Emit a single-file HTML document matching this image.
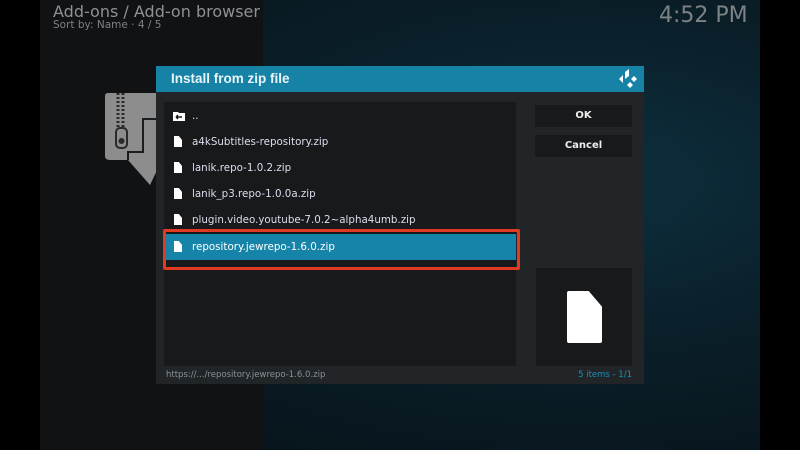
<!DOCTYPE html>
<html><head><style>
*{margin:0;padding:0;box-sizing:border-box}
body{width:800px;height:450px;overflow:hidden;background:#000;font-family:"DejaVu Sans","Liberation Sans",sans-serif;position:relative}
.bg{position:absolute;left:40px;top:0;width:720px;height:450px;background:radial-gradient(ellipse at 75% 40%,#0d3040 0%,#0a1e28 45%,#071016 100%)}
.lp{position:absolute;left:40px;top:0;width:223px;height:450px;background:#101214}
.t{position:absolute;color:#9aa0a4}
.dlg{position:absolute;left:156px;top:66px;width:488px;height:318px;background:#212528}
.hdr{position:absolute;left:0;top:0;width:488px;height:26px;background:#1683a6;color:#e8f4f8;font-family:"Liberation Sans",sans-serif;font-size:13.5px;font-weight:bold;line-height:26px;padding-left:15px}
.list{position:absolute;left:8px;top:36px;width:352px;height:264px;background:#17191b}
.row{position:absolute;left:0;width:352px;height:26px;line-height:26px;color:#dde;font-size:10.3px;padding-left:28px}
.row.sel{background:#1584a8;color:#fff}
.fi{position:absolute;left:10px;top:7px;width:8px;height:11px;background:#fff;clip-path:polygon(0 0,60% 0,100% 35%,100% 100%,0 100%)}
.btn{position:absolute;left:379px;width:97px;height:22px;background:#17191b;color:#eee;font-size:10px;font-weight:bold;text-align:center;line-height:22px}
</style></head><body>
<div class="bg"></div><div class="lp"></div>
<div class="t" style="left:53px;top:2px;font-size:16px;color:#8c9296">Add-ons / Add-on browser</div>
<div class="t" style="left:53px;top:19px;font-size:10.5px;color:#7c8286">Sort by: Name · 4 / 5</div>
<div class="t" style="left:659px;top:3px;font-size:22px;color:#7c8286">4:52 PM</div>
<svg style="position:absolute;left:104px;top:92px" width="60" height="96" viewBox="0 0 60 96">
<path d="M4 1H56V72L46 93L24 68H6Q1 68 1 64V4Q1 1 4 1Z" fill="#8d8d8d"/>
<path d="M56 27H39V60H24V68" fill="none" stroke="#1a1c1e" stroke-width="2"/>
<path d="M14 1V36M19 1V36" stroke="#2a2a2a" stroke-width="3" stroke-dasharray="2 2"/>
<rect x="12" y="36" width="11" height="20" rx="4" fill="none" stroke="#2a2a2a" stroke-width="2"/>
<circle cx="17.5" cy="49" r="3" fill="#2a2a2a"/>
</svg>
<div class="dlg">
<div class="hdr">Install from zip file</div>
<svg style="position:absolute;left:460px;top:3px" width="22" height="20" viewBox="0 0 22 20"><g fill="#fff"><path d="M3 10l4-4v8z"/><path d="M9 3l4-3 0 7-4 3z"/><path d="M15 10l3-3 3 3-3 3z"/><path d="M11 16l3-3 3 3-3 3z"/></g></svg>
<div class="list">
<div class="row" style="top:1px"><svg style="position:absolute;left:9px;top:8px" width="12" height="10"><path d="M0 1h5l1 1h6v8H0z" fill="#fff"/><path d="M3 6h6M3 6l2-2M3 6l2 2" stroke="#17191b" stroke-width="1.4"/></svg>..</div>
<div class="row" style="top:27px"><i class="fi"></i>a4kSubtitles-repository.zip</div>
<div class="row" style="top:53px"><i class="fi"></i>lanik.repo-1.0.2.zip</div>
<div class="row" style="top:79px"><i class="fi"></i>lanik_p3.repo-1.0.0a.zip</div>
<div class="row" style="top:105px"><i class="fi"></i>plugin.video.youtube-7.0.2~alpha4umb.zip</div>
<div class="row sel" style="top:132px"><i class="fi"></i>repository.jewrepo-1.6.0.zip</div>
</div>
<div style="position:absolute;left:7px;top:163px;width:357px;height:41px;border:3px solid #e03a22;border-radius:2px"></div>
<div class="btn" style="top:39px">OK</div>
<div class="btn" style="top:69px">Cancel</div>
<div style="position:absolute;left:380px;top:202px;width:96px;height:98px;background:#17191b"><div style="position:absolute;left:31px;top:23px;width:35px;height:52px;background:#fff;border-radius:2px;clip-path:polygon(0 0,62% 0,100% 30%,100% 100%,0 100%)"></div></div>
<div style="position:absolute;left:10px;top:304px;font-size:8.5px;color:#8a9094">https://.../repository.jewrepo-1.6.0.zip</div>
<div style="position:absolute;right:12px;top:304px;font-size:8.5px;color:#1d8fb5">5 items - 1/1</div>
</div>
</body></html>
